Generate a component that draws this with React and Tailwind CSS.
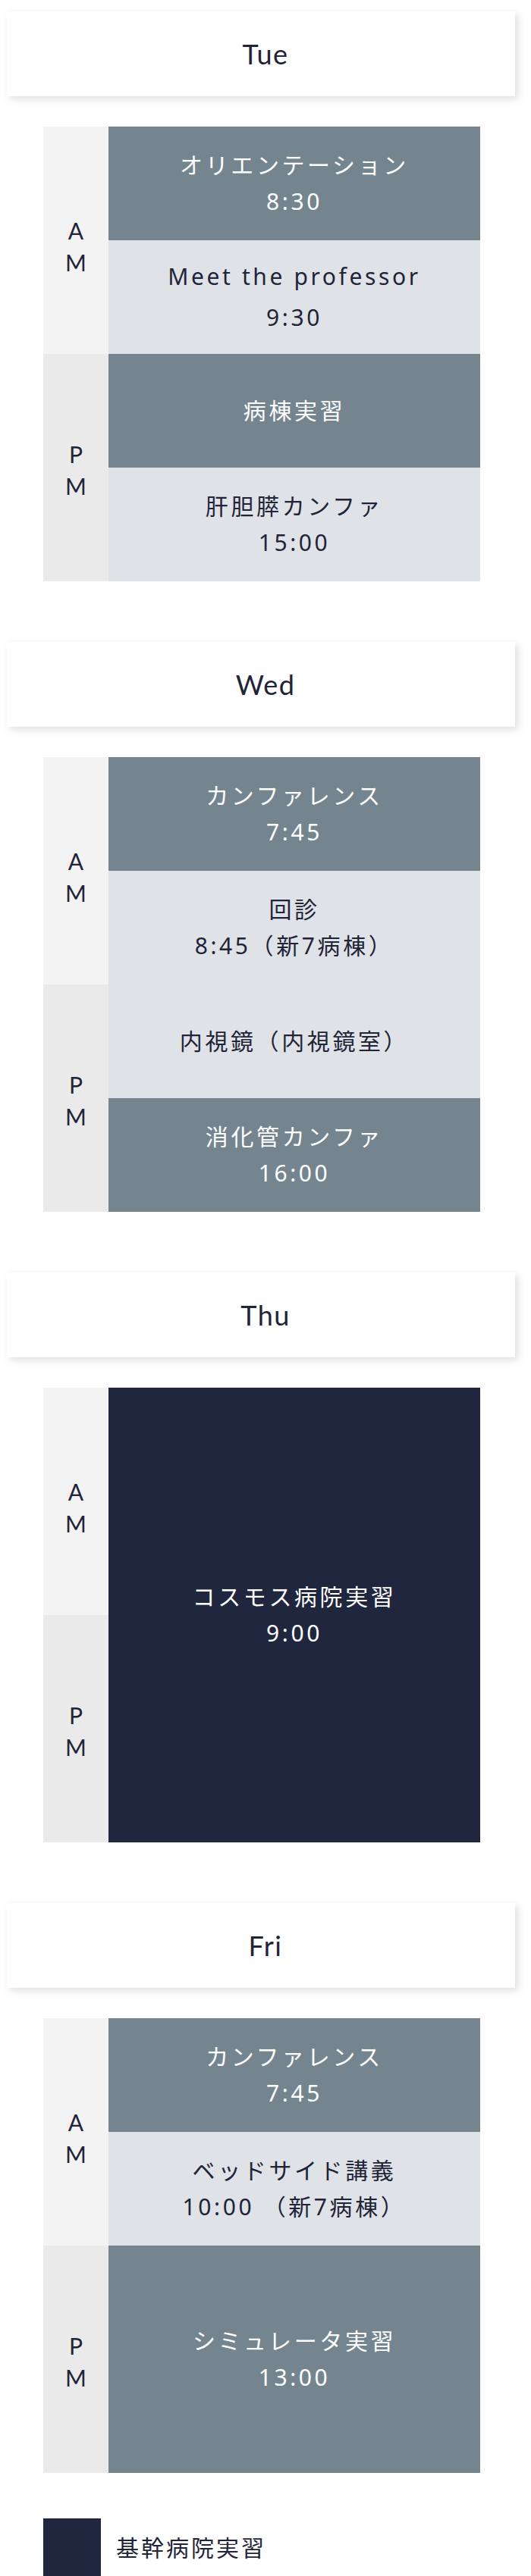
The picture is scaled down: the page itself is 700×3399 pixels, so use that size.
import React from "react";

const KIND = {
  dark: "bg-[#748590] text-white",
  light: "bg-[#dfe2e6] text-[#1f2438]",
  navy: "bg-[#20263d] text-white",
};

const H = {
  1: "h-[150px]",
  2: "h-[300px]",
  4: "h-[600px]",
};

const days = [
  {
    name: "Tue",
    slots: [
      { kind: "dark", span: 1, lines: ["オリエンテーション", "8:30"] },
      { kind: "light", span: 1, lines: ["Meet the professor", "9:30"], wide: true },
      { kind: "dark", span: 1, lines: ["病棟実習"] },
      { kind: "light", span: 1, lines: ["肝胆膵カンファ", "15:00"] },
    ],
  },
  {
    name: "Wed",
    slots: [
      { kind: "dark", span: 1, lines: ["カンファレンス", "7:45"] },
      { kind: "light", span: 1, lines: ["回診", "8:45（新7病棟）"] },
      { kind: "light", span: 1, lines: ["内視鏡（内視鏡室）"] },
      { kind: "dark", span: 1, lines: ["消化管カンファ", "16:00"] },
    ],
  },
  {
    name: "Thu",
    slots: [{ kind: "navy", span: 4, lines: ["コスモス病院実習", "9:00"] }],
  },
  {
    name: "Fri",
    slots: [
      { kind: "dark", span: 1, lines: ["カンファレンス", "7:45"] },
      { kind: "light", span: 1, lines: ["ベッドサイド講義", "10:00 （新7病棟）"] },
      { kind: "dark", span: 2, lines: ["シミュレータ実習", "13:00"] },
    ],
  },
];

function Label({ letters, bg, pad }) {
  return (
    <div className={`h-[300px] ${bg} ${pad} flex flex-col items-center justify-center`}>
      {letters.map((l) => (
        <span
          key={l}
          className="font-['Lato',sans-serif] text-[30px] leading-[42px] text-[#1f2438]"
        >
          {l}
        </span>
      ))}
    </div>
  );
}

function Slot({ slot }) {
  return (
    <div
      className={`${H[slot.span]} ${KIND[slot.kind]} flex flex-col items-center justify-center font-['Noto_Sans','Noto_Sans_CJK_JP',sans-serif] text-[30px] tracking-[0.12em] ${
        slot.wide ? "leading-[54px]" : "leading-[48px]"
      }`}
    >
      {slot.lines.map((l, i) => (
        <span key={i} className="whitespace-pre">
          {l}
        </span>
      ))}
    </div>
  );
}

function Day({ day, last }) {
  return (
    <section className={last ? "mb-[60px]" : "mb-[80px]"}>
      <div className="ml-[9px] w-[670px] h-[112px] bg-white shadow-[4px_4px_10px_rgba(0,0,0,0.13)] flex items-center justify-center pl-[12px]">
        <span className="font-['Lato',sans-serif] text-[36px] text-[#1f2438] tracking-[0.04em]">
          {day.name}
        </span>
      </div>
      <div className="mt-[40px] ml-[57px] w-[576px] flex">
        <div className="w-[86px] flex flex-col">
          <Label letters={["A", "M"]} bg="bg-[#f3f3f3]" pad="pt-[16px]" />
          <Label letters={["P", "M"]} bg="bg-[#eaeaea]" pad="pt-[6px]" />
        </div>
        <div className="flex-1 flex flex-col">
          {day.slots.map((s, i) => (
            <Slot key={i} slot={s} />
          ))}
        </div>
      </div>
    </section>
  );
}

export default function App() {
  return (
    <div className="w-[700px] bg-white pt-[15px]">
      {days.map((d, i) => (
        <Day key={d.name} day={d} last={i === days.length - 1} />
      ))}
      <div className="ml-[57px] flex items-center gap-[20px]">
        <div className="w-[76px] h-[76px] bg-[#20263d]" />
        <span className="font-['Noto_Sans','Noto_Sans_CJK_JP',sans-serif] text-[30px] tracking-[0.1em] text-[#1f2438]">
          基幹病院実習
        </span>
      </div>
    </div>
  );
}
